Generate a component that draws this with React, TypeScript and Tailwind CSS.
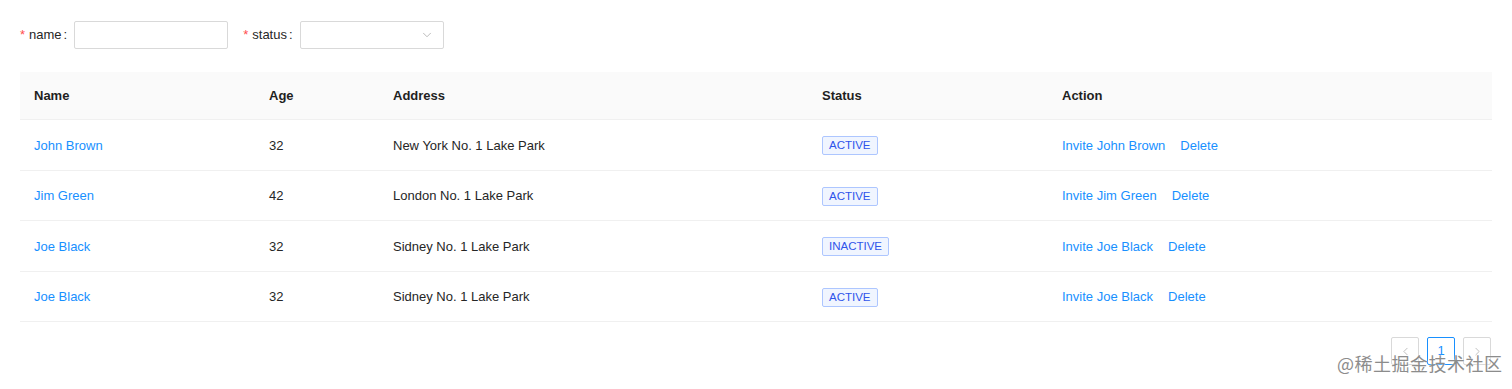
import { ChevronDown, ChevronLeft, ChevronRight } from "lucide-react";

type Row = {
  key: number;
  name: string;
  age: number;
  address: string;
  status: string;
};

const rows: Row[] = [
  { key: 1, name: "John Brown", age: 32, address: "New York No. 1 Lake Park", status: "ACTIVE" },
  { key: 2, name: "Jim Green", age: 42, address: "London No. 1 Lake Park", status: "ACTIVE" },
  { key: 3, name: "Joe Black", age: 32, address: "Sidney No. 1 Lake Park", status: "INACTIVE" },
  { key: 4, name: "Joe Black", age: 32, address: "Sidney No. 1 Lake Park", status: "ACTIVE" },
];

const cols = "grid grid-cols-[235px_124px_429px_240px_1fr]";

export default function App() {
  return (
    <main
      className="relative w-full h-[389px] bg-white px-5 pt-[21px] text-[13px] text-[#262626] overflow-hidden"
      style={{ fontFamily: '"Liberation Sans", Arial, sans-serif' }}
    >
      <form className="flex items-center h-[28px]">
        <label className="flex items-center mr-[7px]">
          <span className="text-[#ff4d4f] mr-[4px]">*</span>
          name
          <span className="ml-[2px]">:</span>
        </label>
        <input className="w-[154px] h-[28px] border border-[#d9d9d9] rounded-[2px] outline-none" />
        <label className="flex items-center ml-[15px] mr-[7px]">
          <span className="text-[#ff4d4f] mr-[4px]">*</span>
          status
          <span className="ml-[2px]">:</span>
        </label>
        <div className="w-[144px] h-[28px] border border-[#d9d9d9] rounded-[2px] flex items-center justify-end pr-[9px]">
          <ChevronDown size={14} strokeWidth={1.3} color="#a6a6a6" />
        </div>
      </form>

      <section className="mt-[23px]">
        <div className={`${cols} h-[48px] bg-[#fafafa] border-b border-[#f0f0f0] items-center font-semibold text-[#1f1f1f]`}>
          <div className="px-[14px]">Name</div>
          <div className="px-[14px]">Age</div>
          <div className="px-[14px]">Address</div>
          <div className="px-[14px]">Status</div>
          <div className="px-[14px]">Action</div>
        </div>
        {rows.map((row) => (
          <div key={row.key} className={`${cols} h-[50.5px] border-b border-[#f0f0f0] items-center pt-px`}>
            <div className="px-[14px] text-[#1890ff]">{row.name}</div>
            <div className="px-[14px]">{row.age}</div>
            <div className="px-[14px]">{row.address}</div>
            <div className="px-[14px]">
              <span className="inline-block px-[6px] h-[19px] leading-[17px] text-[11.5px] border border-[#adc6ff] bg-[#f0f5ff] text-[#2f54eb] rounded-[2px]">
                {row.status}
              </span>
            </div>
            <div className="px-[14px] flex gap-[15px] text-[#1890ff]">
              <span>Invite {row.name}</span>
              <span>Delete</span>
            </div>
          </div>
        ))}
      </section>

      <nav className="flex justify-end gap-[8px] mt-[15px] pr-px">
        <div className="w-[28px] h-[28px] border border-[#d9d9d9] rounded-[2px] flex items-center justify-center">
          <ChevronLeft size={13} strokeWidth={1.3} color="#a6a6a6" />
        </div>
        <div className="w-[28px] h-[28px] border border-[#1890ff] rounded-[2px] flex items-center justify-center text-[#1890ff]">
          1
        </div>
        <div className="w-[28px] h-[28px] border border-[#d9d9d9] rounded-[2px] flex items-center justify-center">
          <ChevronRight size={13} strokeWidth={1.3} color="#a6a6a6" />
        </div>
      </nav>

      <div
        className="absolute left-[1337px] top-[350px] text-[18px] text-[#8c8c8c] tracking-[0.5px] pointer-events-none"
        style={{ fontFamily: '"Noto Sans CJK SC", sans-serif', textShadow: "0 0 2px #fff" }}
      >
        @稀土掘金技术社区
      </div>
    </main>
  );
}
